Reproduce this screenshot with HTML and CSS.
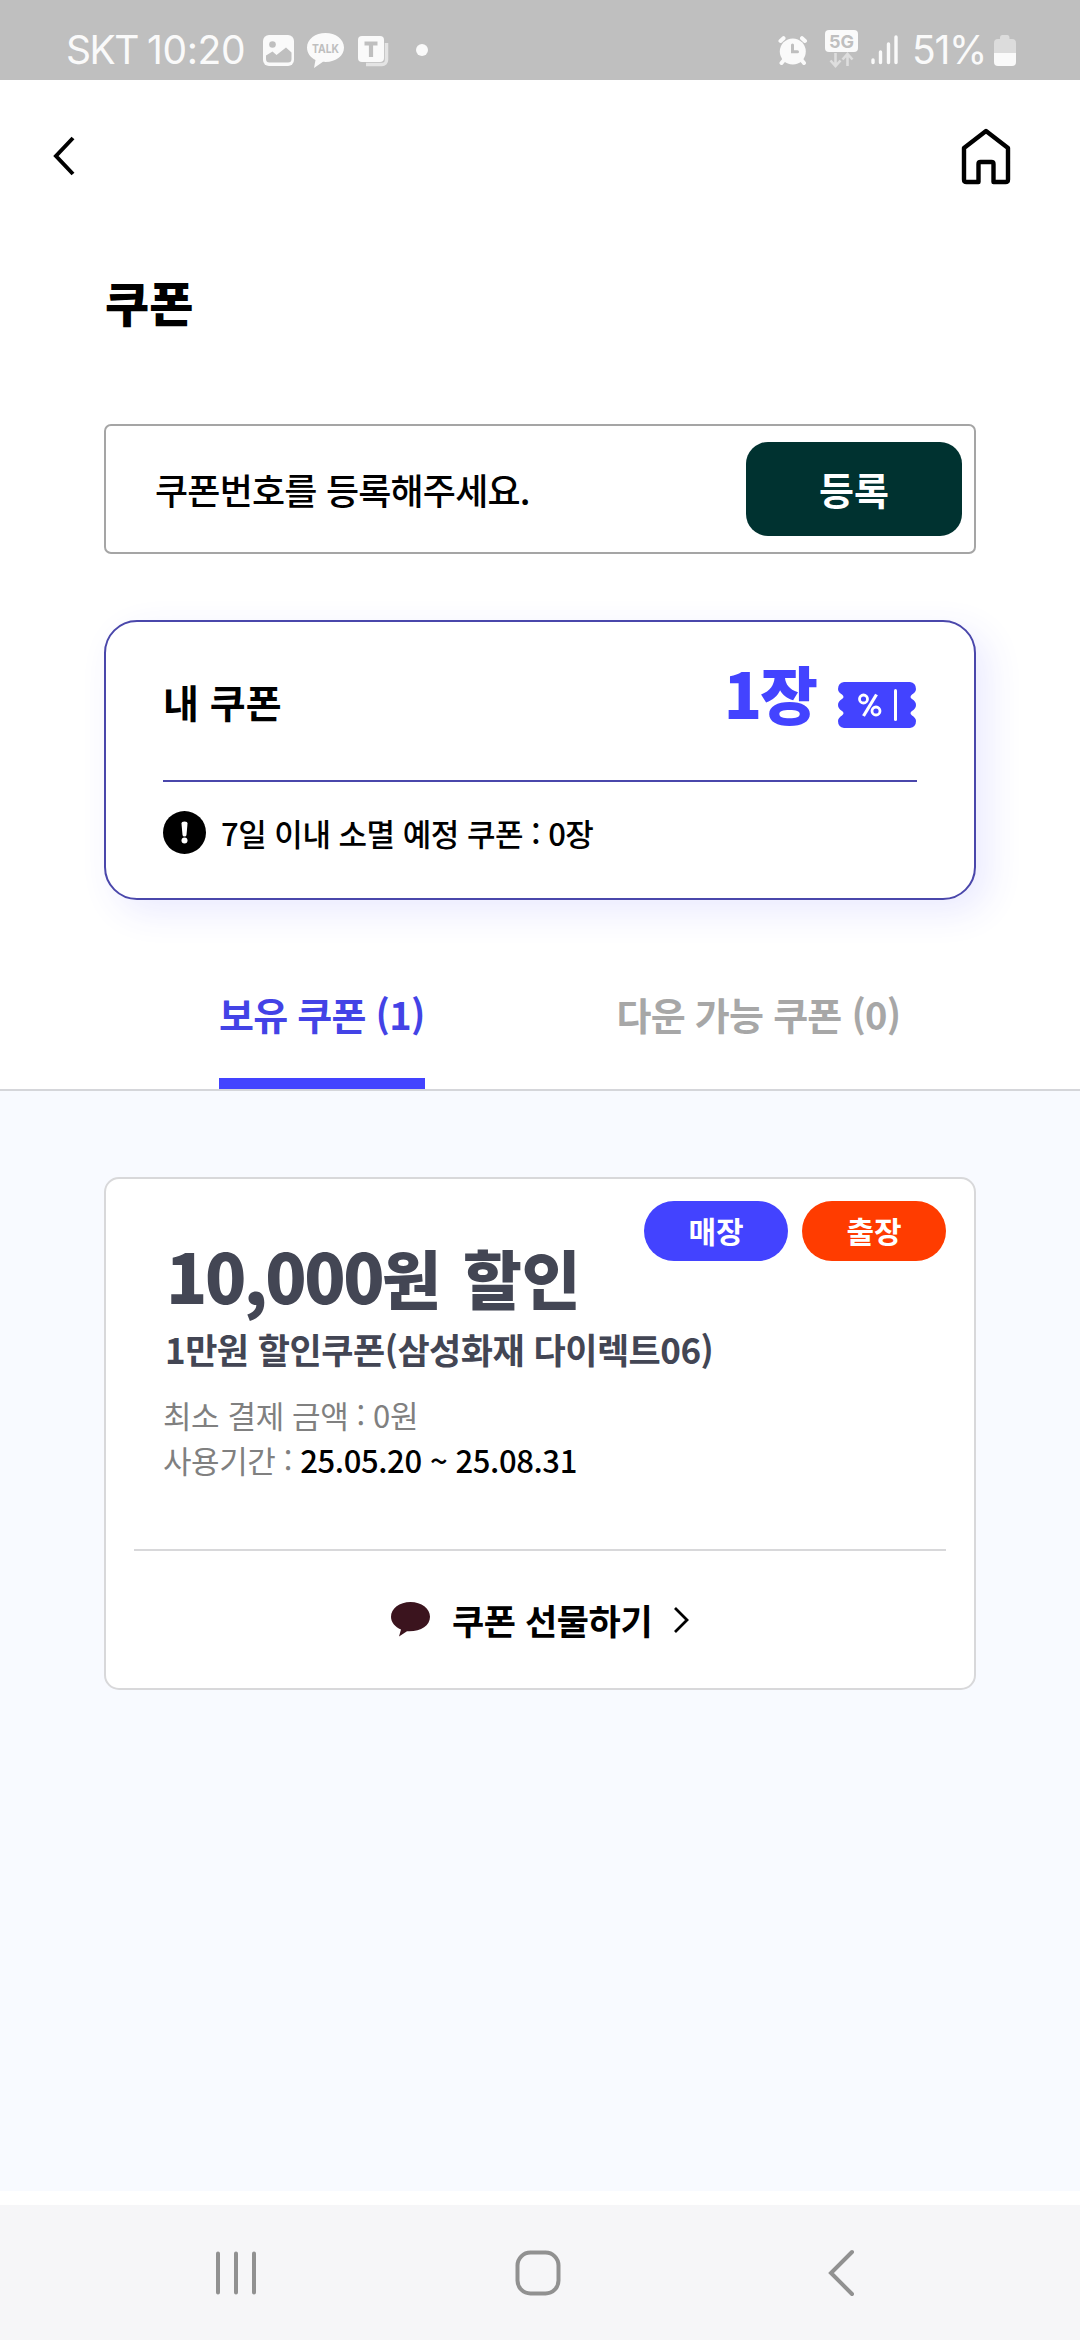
FILE: index.html
```html
<!DOCTYPE html>
<html lang="ko">
<head>
<meta charset="utf-8">
<title>쿠폰</title>
<link rel="stylesheet" href="styles.css">
</head>
<body>
<div class="statusbar">
  <span class="carrier">SKT</span><span class="clock">10:20</span>
  <svg class="st-photo" width="31" height="31" viewBox="0 0 31 31"><rect width="31" height="31" rx="6" fill="#fafafa"/><circle cx="9.500" cy="9.500" r="3.300" fill="#bfbfbf"/><path d="M3 20.500l6.500-4 4 3.500 9.500-7.500 5.500 5V24a3.500 3.500 0 0 1-3.500 3.500H6.500A3.500 3.500 0 0 1 3 24z" fill="#bfbfbf"/></svg>
  <svg class="st-talk" width="37" height="35" viewBox="0 0 37 35"><path d="M18.500 0C8.500 0 0 6 0 14.500c0 5.500 3.500 10 8.500 12.500L7 35l9-6.200c12 1 21-5.300 21-14.300C37 6 28.500 0 18.500 0z" fill="#fafafa"/><text x="18.500" y="19.500" text-anchor="middle" textLength="27" lengthAdjust="spacingAndGlyphs" class="talk-label">TALK</text></svg>
  <svg class="st-t" width="31" height="31" viewBox="0 0 31 31"><path d="M28.500 7v17a4.500 4.500 0 0 1-4.500 4.500H8" fill="none" stroke="#e4e4e4" stroke-width="3.500"/><rect width="26" height="26" rx="4" fill="#fafafa"/><path d="M6.500 5.500h13v4h-4.400V21h-4.200V9.500H6.500z" fill="#bfbfbf"/></svg>
  <i class="st-dot"></i>
  <svg class="st-alarm" width="30" height="29" viewBox="0 0 30 29"><g fill="none" stroke="#fafafa" stroke-width="4" stroke-linecap="round"><path d="M2.500 5l3-2.800M27 5l-3-2.800M6 24l-2.500 3M23.500 24l2.500 3"/></g><circle cx="14.800" cy="15.500" r="13" fill="#fafafa"/><path d="M14.500 9v6.800h5" fill="none" stroke="#bfbfbf" stroke-width="3" stroke-linecap="round"/></svg>
  <svg class="st-5g" width="33" height="38" viewBox="0 0 33 38"><rect width="33" height="22" rx="4" fill="#fafafa"/><text x="16.500" y="17.500" text-anchor="middle" textLength="25" lengthAdjust="spacingAndGlyphs" class="net-label">5G</text><path d="M10.500 23v13M5.500 30.500l5 5.500 5-5.500M22.500 36V24M17.500 29.500l5-5.500 5 5.500" fill="none" stroke="#dedede" stroke-width="2.600"/></svg>
  <svg class="st-signal" width="27" height="30" viewBox="0 0 27 30" stroke="#fafafa" stroke-width="3.400" stroke-linecap="round"><path d="M2 25v2.500M9.500 17v10.500M17.500 9v18.500M25 2v25.500"/></svg>
  <span class="battery-pct">51%</span>
  <svg class="st-batt" width="22" height="31" viewBox="0 0 22 31"><path d="M6 4V2.500Q6 0 8 0h5.500q2 0 2 2.500V4H18q4 0 4 4v10H0V8q0-4 4-4z" fill="#dcdcdc"/><path d="M0 18h22v9q0 4-4 4H4q-4 0-4-4z" fill="#fafafa"/></svg>
</div>

<header class="topbar">
  <svg width="24" height="42" viewBox="0 0 24 42"><path d="M21 3L4 21l17 18" fill="none" stroke="#000" stroke-width="4"/></svg>
  <svg width="50" height="58" viewBox="0 0 50 58"><path d="M25 4L3 21v31.500Q3 55 5.500 55h12V37q0-2 2-2h11q2 0 2 2v18h12q2.500 0 2.500-2.500V21z" fill="none" stroke="#000" stroke-width="4.400" stroke-linejoin="round"/></svg>
</header>

<h1 class="title">쿠폰</h1>

<div class="register">
  <span class="placeholder">쿠폰번호를 등록해주세요.</span>
  <button class="register-btn">등록</button>
</div>

<section class="summary">
  <div class="summary-top">
    <h2 class="summary-name">내 쿠폰</h2>
    <strong class="summary-count">1장</strong>
    <svg class="ticket" width="78" height="46" viewBox="0 0 78 46"><path d="M6 0H72Q78 1 78 7q0 3-4 5.500q-3 2.500 0 4.500 4 2.500 4 6t-4 6q-3 2 0 4.500 4 2.500 4 5.500 0 6-6 7H6Q0 45 0 39q0-3 4-5.500q3-2.500 0-4.500-4-2.500-4-6t4-6q3-2 0-4.500Q0 10 0 7 0 1 6 0z" fill="#4343ff"/><g fill="none" stroke="#fff"><circle cx="25.500" cy="17" r="4" stroke-width="2.800"/><circle cx="38" cy="29" r="4" stroke-width="2.800"/><path d="M38.500 12.500L25.500 34" stroke-width="3.200"/><path d="M57.500 8.500v29" stroke-width="3" stroke-linecap="round"/></g></svg>
  </div>
  <div class="summary-note">
    <svg width="43" height="43" viewBox="0 0 43 43"><circle cx="21.500" cy="21.500" r="21.500"/><path d="M18.500 12.500q0-2 3-2t3 2l-1 11.500q-.2 1.500-2 1.500t-2-1.500z" fill="#fff"/><circle cx="21.500" cy="29.500" r="3" fill="#fff"/></svg>
    <span>7일 이내 소멸 예정 쿠폰 : 0장</span>
  </div>
</section>

<nav class="tabs">
  <a class="tab tab-active">보유 쿠폰 (1)</a>
  <a class="tab">다운 가능 쿠폰 (0)</a>
</nav>

<main class="list">
  <article class="coupon">
    <div class="badges"><span class="badge badge-store">매장</span><span class="badge badge-visit">출장</span></div>
    <div class="coupon-body">
      <h3 class="amount">10,000<span class="amount-unit">원 할인</span></h3>
      <p class="coupon-name">1만원 할인쿠폰(삼성화재 다이렉트06)</p>
      <p class="meta">최소 결제 금액 : 0원</p>
      <p class="meta">사용기간 : <span class="dates">25.05.20 ~ 25.08.31</span></p>
    </div>
    <a class="gift">
      <svg class="gift-bubble" width="39" height="35" viewBox="0 0 39 35"><path d="M19.500 0C8.500 0 0 6.500 0 14.800 0 20.500 4 25 10 27.500L8 34.500l8-5.300C29 30 39 24 39 14.800 39 6.500 30.500 0 19.500 0z" fill="#3b141e"/></svg>
      <span class="gift-label">쿠폰 선물하기</span>
      <svg class="gift-arrow" width="17" height="28" viewBox="0 0 17 28"><path d="M2 2l12 12L2 26" fill="none" stroke="#000" stroke-width="2.800"/></svg>
    </a>
  </article>
</main>

<footer class="sysnav">
  <svg width="42" height="44" viewBox="0 0 42 44"><path d="M3 2.500v39M21 2.500v39M39 2.500v39" stroke="#919191" stroke-width="4" stroke-linecap="round"/></svg>
  <svg width="46" height="46" viewBox="0 0 46 46"><rect x="2.500" y="2.500" width="41" height="41" rx="13" fill="none" stroke="#919191" stroke-width="4"/></svg>
  <svg width="28" height="48" viewBox="0 0 28 48"><path d="M25 3L4 24l21 21" fill="none" stroke="#919191" stroke-width="4" stroke-linecap="round"/></svg>
</footer>
</body>
</html>
```
FILE: styles.css
```css
* { box-sizing: border-box; margin: 0; padding: 0; }

body {
  width: 1080px;
  height: 2340px;
  display: flex;
  flex-direction: column;
  overflow: hidden;
  background: #fff;
  color: #000;
  font-family: "Noto Sans CJK KR", "Noto Sans", sans-serif;
}

svg { display: block; flex: none; }

/* Device status bar */
.statusbar {
  flex: none;
  display: flex;
  align-items: flex-start;
  height: 80px;
  padding-left: 66px;
  background: #bfbfbf;
  color: #fafafa;
  font: 400 39px/40px Inter, sans-serif;
}
.statusbar span { margin-top: 30px; white-space: nowrap; }
.carrier { width: 81px; letter-spacing: -1.5px; }
.clock { width: 97px; letter-spacing: -0.4px; }
.st-photo { margin: 35px 0 0 19px; }
.st-talk { margin: 33px 0 0 13px; }
.st-t { margin: 36px 0 0 14px; }
.st-dot { width: 12px; height: 12px; margin: 44px 0 0 27px; border-radius: 50%; background: #fafafa; }
.st-alarm { margin: 36px 0 0 350px; }
.st-5g { margin: 30px 0 0 17px; }
.st-signal { margin: 35px 0 0 13px; }
.battery-pct { width: 75px; margin-left: 14px; letter-spacing: -1.3px; }
.st-batt { margin: 35px 0 0 7px; }
.talk-label { font: 700 12px Inter, sans-serif; fill: #bfbfbf; }
.net-label { font: 700 18px Inter, sans-serif; fill: #bfbfbf; }

/* App header */
.topbar {
  flex: none;
  display: flex;
  justify-content: space-between;
  align-items: center;
  height: 152px;
  padding: 0 69px 0 52px;
}

.title {
  flex: none;
  height: 192px;
  margin-left: 105px;
  padding-top: 36px;
  font-size: 48px;
  font-weight: 900;
  line-height: 66px;
}

/* Coupon code entry */
.register {
  flex: none;
  display: flex;
  justify-content: space-between;
  align-items: center;
  width: 872px;
  height: 130px;
  margin: 0 104px;
  padding: 0 12px 0 49px;
  border: 2px solid #a5a5a5;
  border-radius: 7px;
}
.placeholder { font-size: 36px; font-weight: 500; letter-spacing: -0.8px; }
.register-btn {
  width: 216px;
  height: 94px;
  border: 0;
  border-radius: 22px;
  background: #003230;
  color: #fff;
  font: 700 38px/90px "Noto Sans CJK KR", sans-serif;
}

/* My coupons summary */
.summary {
  flex: none;
  width: 872px;
  height: 280px;
  margin: 66px 104px 0;
  padding: 0 57px;
  border: 2px solid #4a47ab;
  border-radius: 33px;
  box-shadow: 12px 12px 36px rgba(67, 67, 255, .11);
}
.summary-top {
  display: flex;
  height: 160px;
  border-bottom: 2px solid #4a47ab;
}
.summary-name { flex: 1; padding-top: 49px; font-size: 39px; font-weight: 700; line-height: 60px; }
.summary-count {
  padding: 30px 2px 0 0;
  color: #4343ff;
  font-size: 63px;
  font-weight: 900;
  letter-spacing: -2px;
  line-height: 80px;
}
.ticket { margin: 60px 1px 0 20px; }
.summary-note {
  display: flex;
  align-items: center;
  gap: 15px;
  height: 101px;
  font-size: 31px;
  font-weight: 500;
  letter-spacing: -0.5px;
}

/* Tabs */
.tabs {
  flex: none;
  display: flex;
  height: 191px;
  padding-left: 219px;
  gap: 192px;
  border-bottom: 2px solid #d5d6da;
}
.tab {
  height: 189px;
  padding-top: 84px;
  color: #a7a7a7;
  font-size: 38px;
  font-weight: 700;
  letter-spacing: -0.75px;
  line-height: 60px;
}
.tab-active { color: #4343e6; border-bottom: 11px solid #4343ff; }

/* Coupon list */
.list { flex: none; height: 1100px; padding: 86px 104px 0; background: #f8faff; }
.coupon {
  position: relative;
  height: 513px;
  padding: 0 28px;
  border: 2px solid #d8d8da;
  border-radius: 15px;
  background: #fff;
}
.badges { position: absolute; top: 22px; right: 28px; display: flex; gap: 14px; }
.badge {
  width: 144px;
  height: 60px;
  border-radius: 30px;
  color: #fff;
  font-size: 30px;
  font-weight: 700;
  line-height: 58px;
  text-align: center;
}
.badge-store { background: #4343ff; }
.badge-visit { background: #ff3c00; }
.coupon-body {
  height: 372px;
  padding: 56px 0 0 29px;
  border-bottom: 2px solid #d8d8da;
  color: #434654;
}
.amount {
  height: 80px;
  padding-left: 3px;
  font-size: 68px;
  font-weight: 900;
  letter-spacing: -2.5px;
  line-height: 80px;
}
.amount-unit { font-size: 64px; letter-spacing: 0; word-spacing: 4px; }
.coupon-name {
  height: 77px;
  padding-left: 2px;
  font-size: 35px;
  font-weight: 700;
  letter-spacing: -0.5px;
  line-height: 67px;
}
.meta { color: #808080; font-size: 31px; letter-spacing: -0.4px; line-height: 45px; }
.dates { color: #000; font-weight: 500; }
.gift { display: flex; padding: 51px 0 0 257px; }
.gift-label {
  margin: -12px 0 0 22px;
  font-size: 35px;
  font-weight: 700;
  letter-spacing: -0.4px;
  line-height: 60px;
  white-space: nowrap;
}
.gift-arrow { margin: 4px 0 0 21px; }

/* Device navigation bar */
.sysnav {
  flex: none;
  display: flex;
  align-items: center;
  height: 135px;
  margin-top: 14px;
  padding-left: 215px;
  gap: 258px;
  background: #f6f6f8;
}
.sysnav svg:last-child { margin-left: 8px; }
```
